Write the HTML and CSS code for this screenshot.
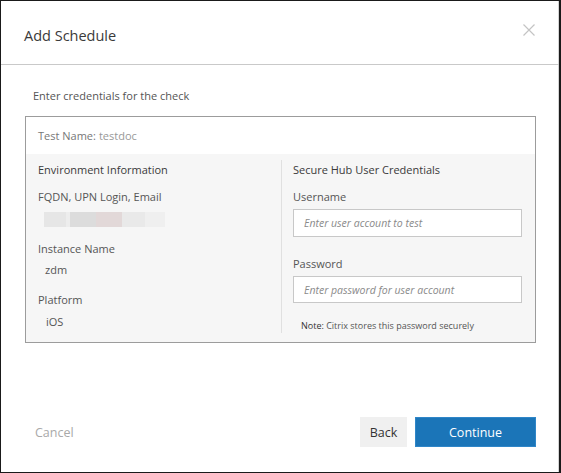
FILE: index.html
```html
<!DOCTYPE html>
<html>
<head>
<meta charset="utf-8">
<link rel="stylesheet" href="styles.css">
</head>
<body>
<div class="frame">
  <div class="dialog">
    <div class="header">
      <h1 class="title">Add Schedule</h1>
      <span class="close">
        <svg width="12" height="12" viewBox="0 0 12 12"><path d="M0.5 0.5 L11.5 11.5 M11.5 0.5 L0.5 11.5" stroke="#c4c4c4" stroke-width="1.2" fill="none"/></svg>
      </span>
    </div>
    <div class="content">
      <p class="intro">Enter credentials for the check</p>
      <div class="box">
        <div class="test-row"><span class="test-label">Test Name:</span> <span class="test-value">testdoc</span></div>
        <div class="panel">
          <div class="col col-left">
            <div class="heading">Environment Information</div>
            <div class="label label-first">FQDN, UPN Login, Email</div>
            <div class="blur"></div>
            <div class="label">Instance Name</div>
            <div class="value">zdm</div>
            <div class="label">Platform</div>
            <div class="value value-ios">iOS</div>
          </div>
          <div class="col col-right">
            <div class="heading">Secure Hub User Credentials</div>
            <div class="label label-first">Username</div>
            <div class="input"><span class="ph">Enter user account to test</span></div>
            <div class="label label-pw">Password</div>
            <div class="input input-pw"><span class="ph">Enter password for user account</span></div>
            <div class="note"><span class="note-strong">Note:</span> Citrix stores this password securely</div>
          </div>
        </div>
      </div>
    </div>
    <div class="footer">
      <span class="cancel">Cancel</span>
      <div class="actions">
        <button class="btn btn-back">Back</button>
        <button class="btn btn-primary">Continue</button>
      </div>
    </div>
  </div>
</div>
</body>
</html>
```

FILE: styles.css
```css
* { box-sizing: border-box; }
html, body { margin: 0; padding: 0; background: #fff; }
body { font-family: "Open Sans", "Noto Sans", sans-serif; color: #333; }

.frame {
  width: 561px;
  height: 473px;
  border: 1px solid #1a1a1a;
  border-right: 2px solid #1a1a1a;
  background: #fff;
}
.dialog {
  height: 100%;
  display: flex;
  flex-direction: column;
  border-right: 1px solid #d4d4d4;
}
.header {
  height: 64px;
  border-bottom: 1px solid #c9c9c9;
  display: flex;
  align-items: center;
  justify-content: space-between;
  padding: 0 24px 0 23px;
  margin-right: -1px;
}
.title {
  margin: 6px 0 0;
  font-size: 14.5px;
  font-weight: 400;
  color: #3a3a3a;
}
.close { display: flex; margin-bottom: 5px; }

.content { padding: 0 0 0 24px; }
.intro {
  margin: 23px 0 0 8px;
  font-size: 11px;
  line-height: 16px;
  color: #555;
}
.box {
  margin-top: 12px;
  width: 511px;
  border: 1px solid #9c9c9c;
}
.test-row {
  height: 37px;
  padding-left: 12px;
  display: flex;
  align-items: center;
  font-size: 11px;
  background: #fff;
}
.test-label { color: #777; }
.test-value { color: #999; margin-left: 3px; }

.panel {
  background: #f6f6f6;
  display: flex;
  padding: 6px 0 9px;
}
.col { flex: none; }
.col-left {
  width: 256px;
  padding-left: 12px;
  border-right: 1px solid #e0e0e0;
}
.col-right {
  width: 253px;
  padding-left: 11px;
}
.heading {
  margin-top: 2px;
  font-size: 11px;
  line-height: 16px;
  color: #3a3a3a;
}
.label {
  margin-top: 14px;
  font-size: 11px;
  line-height: 16px;
  color: #555;
}
.label-first { margin-top: 11px; }
.blur {
  margin: 7px 0 0 6px;
  width: 121px;
  height: 15px;
  background: linear-gradient(90deg, #e6e6e6 0, #e6e6e6 22px, #ededed 22px, #ededed 26px, #dcdcdc 26px, #dcdcdc 52px, #e2d8d8 52px, #e2d8d8 78px, #e9e9e9 78px, #e9e9e9 101px, #efefef 101px);
}
.value {
  margin-top: 5px;
  padding-left: 7px;
  font-size: 11px;
  line-height: 16px;
  color: #555;
}
.value-ios { margin-top: 6px; padding-left: 8px; }

.input {
  margin-top: 4px;
  width: 229px;
  height: 28px;
  border: 1px solid #c8c8c8;
  background: #fff;
  display: flex;
  align-items: center;
  padding-left: 10px;
}
.input-pw { height: 27px; }
.label-pw { margin-top: 19px; }
.ph {
  font-size: 10.5px;
  font-style: italic;
  color: #8a8a8a;
}
.note {
  margin-top: 16px;
  padding-left: 8px;
  font-size: 9px;
  line-height: 14px;
  color: #555;
}
.note-strong { color: #333; }

.footer {
  margin-top: auto;
  padding: 0 22px 25px 34px;
  display: flex;
  align-items: center;
  justify-content: space-between;
}
.cancel {
  font-size: 12.5px;
  color: #a9a9a9;
}
.actions { display: flex; gap: 8px; }
.btn {
  height: 30px;
  border: none;
  font-family: "Open Sans", "Noto Sans", sans-serif;
  font-size: 12.5px;
  padding: 0;
  cursor: pointer;
}
.btn-back {
  width: 47px;
  background: #f0f0f0;
  color: #333;
}
.btn-primary {
  width: 121px;
  background: #1b75b8;
  color: #fff;
  border: 1px solid #2f86c8;
}
```
